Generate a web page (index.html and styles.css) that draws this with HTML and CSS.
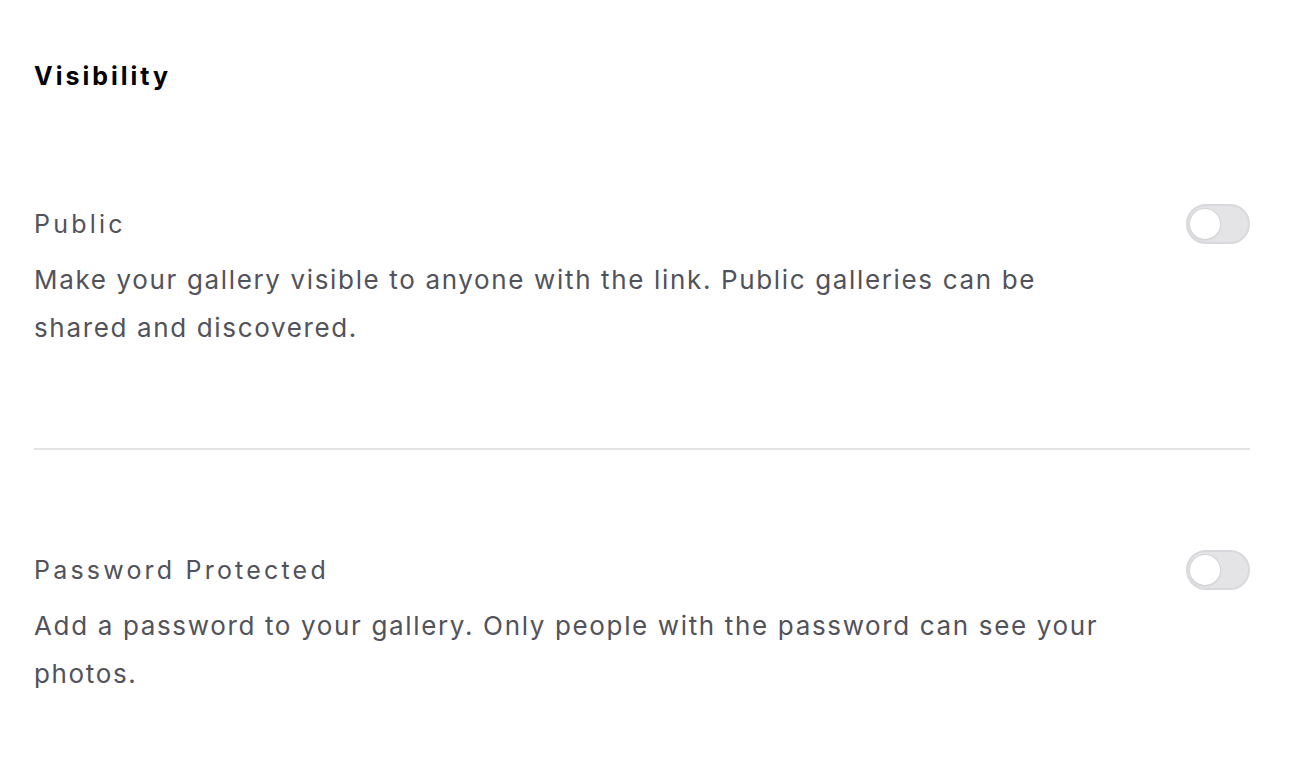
FILE: index.html
```html
<!DOCTYPE html>
<html>
<head>
<meta charset="utf-8">
<link rel="stylesheet" href="styles.css">
</head>
<body>
<main class="page">
  <h2 class="heading">Visibility</h2>
  <section class="setting">
    <div class="setting-text">
      <div class="setting-title">Public</div>
      <p class="setting-desc">Make your gallery visible to anyone with the link. Public galleries can be shared and discovered.</p>
    </div>
    <span class="toggle"><span class="knob"></span></span>
  </section>
  <section class="setting setting-last">
    <div class="setting-text">
      <div class="setting-title">Password Protected</div>
      <p class="setting-desc">Add a password to your gallery. Only people with the password can see your photos.</p>
    </div>
    <span class="toggle"><span class="knob"></span></span>
  </section>
</main>
</body>
</html>
```
FILE: styles.css
```css
html, body {
  margin: 0;
  padding: 0;
  background: #ffffff;
}
body {
  font-family: Inter, "Noto Sans", sans-serif;
  color: #52525b;
}
.page {
  padding: 60px 46px 0 34px;
}
.heading {
  margin: 0;
  font-size: 25px;
  line-height: 32px;
  font-weight: 700;
  letter-spacing: 3px;
  color: #000000;
}
.setting {
  display: flex;
  justify-content: space-between;
  align-items: flex-start;
  padding: 112px 0 96px 0;
  border-bottom: 2px solid #e4e4e7;
}
.setting-last {
  border-bottom: none;
  padding-top: 100px;
}
.setting-text {
  max-width: 1075px;
}
.setting-title {
  font-size: 25px;
  line-height: 40px;
  letter-spacing: 3.2px;
  color: #52525b;
}
.setting-desc {
  margin: 12px 0 0 0;
  font-size: 26px;
  line-height: 48px;
  letter-spacing: 1.65px;
  color: #52525b;
}
.toggle {
  flex: none;
  width: 64px;
  height: 40px;
  box-sizing: border-box;
  border-radius: 20px;
  background: #e4e4e7;
  border: 2px solid #d9d9dd;
  display: flex;
  align-items: center;
  padding-left: 2px;
}
.knob {
  width: 30px;
  height: 30px;
  border-radius: 50%;
  background: #ffffff;
  box-shadow: 0 0 0 1px #d4d4d8, 0 1px 2px rgba(0,0,0,0.12);
}
```
